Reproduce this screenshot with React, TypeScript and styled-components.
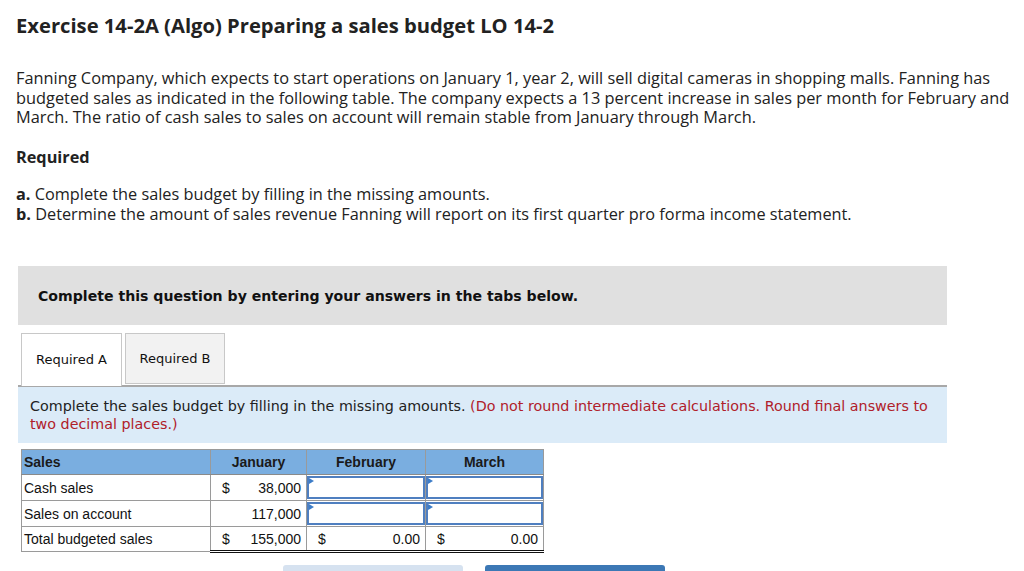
import React from "react";
import styled, { createGlobalStyle } from "styled-components";

const Global = createGlobalStyle`
  html, body { margin: 0; padding: 0; background: #fff; }
  body { font-family: "Open Sans", "Lato", sans-serif; color: #222; }
`;

const Page = styled.div`
  padding: 12px 0 0 16px;
  width: 1024px;
  box-sizing: border-box;
  overflow: hidden;
  height: 571px;
`;

const Title = styled.h1`
  margin: 0;
  font-family: "Open Sans", sans-serif;
  font-weight: 700;
  font-size: 20.2px;
  line-height: 26px;
  color: #222;
`;

const Para = styled.p`
  margin: 31px 0 0 0;
  width: 1004px;
  font-size: 16.35px;
  line-height: 19.5px;
  color: #222;
`;

const Sub = styled.div`
  margin-top: 20px;
  font-weight: 700;
  font-size: 16.3px;
  line-height: 19.5px;
`;

const List = styled.div`
  margin-top: 17px;
  font-size: 16.3px;
  line-height: 20px;
`;

const Instruction = styled.div`
  margin: 42px 0 0 2px;
  width: 929px;
  height: 59px;
  background: #e0e0e0;
  display: flex;
  align-items: center;
  padding-left: 20px;
  box-sizing: border-box;
  font-family: "DejaVu Sans", Verdana, sans-serif;
  font-weight: 700;
  font-size: 14.1px;
  color: #111;
`;

const Tabs = styled.div`
  display: flex;
  gap: 3px;
  margin: 8px 0 0 5px;
  position: relative;
  z-index: 1;
`;

const Tab = styled.div<{ $active?: boolean }>`
  width: ${(p) => (p.$active ? 101 : 100)}px;
  height: ${(p) => (p.$active ? 53 : 51)}px;
  box-sizing: border-box;
  border: 1px solid #c8c8c8;
  border-bottom: ${(p) => (p.$active ? "none" : "1px solid #c8c8c8")};
  background: ${(p) => (p.$active ? "#fff" : "#f2f2f2")};
  display: flex;
  align-items: center;
  justify-content: center;
  padding-bottom: ${(p) => (p.$active ? 2 : 0)}px;
  font-family: "DejaVu Sans", Verdana, sans-serif;
  font-size: 13px;
  color: #111;
`;

const Panel = styled.div`
  margin: -1px 0 0 2px;
  width: 929px;
  box-sizing: border-box;
  border-top: 2px solid #a8a8a8;
  background: #dbebf8;
  padding: 10px 12px 10px 12px;
  font-family: "DejaVu Sans", Verdana, sans-serif;
  font-size: 14.3px;
  line-height: 18px;
  color: #222;
`;

const Red = styled.span`
  color: #b0202a;
`;

const Table = styled.table`
  margin: 6px 0 0 5px;
  border-collapse: collapse;
  font-family: "Liberation Sans", Arial, sans-serif;
  font-size: 14px;
  color: #111;
`;

const Th = styled.th<{ $left?: boolean; $w: number }>`
  width: ${(p) => p.$w}px;
  height: 25px;
  box-sizing: border-box;
  background: #7aaee0;
  border: 1px solid #9a9a9a;
  border-bottom: 1px solid #8a8a8a;
  text-align: ${(p) => (p.$left ? "left" : "center")};
  padding: 0 2px;
  font-weight: 700;
  color: #1a1a1a;
`;

const Td = styled.td<{ $total?: boolean }>`
  height: 25px;
  box-sizing: border-box;
  border: 1px solid #9a9a9a;
  ${(p) => (p.$total ? "border-top: 1px solid #111; border-bottom: 3px double #111;" : "")}
  padding: 0 2px;
  white-space: nowrap;
`;

const LabelTd = styled.td`
  height: 25px;
  box-sizing: border-box;
  border: 1px solid #9a9a9a;
  padding: 0 2px;
`;

const Money = styled.div`
  display: flex;
  justify-content: space-between;
  padding: 0 3px 0 9px;
`;

const InputTd = styled.td`
  height: 25px;
  padding: 0;
  border: 1px solid #9a9a9a;
  position: relative;
`;

const InputBox = styled.div`
  height: 23px;
  box-sizing: border-box;
  border: 2px solid #4f7fc0;
  background: #fff;
  position: relative;
  &::before {
    content: "";
    position: absolute;
    left: 0;
    top: 0;
    border-left: 5px solid #3d7dc8;
    border-top: 3px solid transparent;
    border-bottom: 3px solid transparent;
  }
`;

const Buttons = styled.div`
  display: flex;
  gap: 22px;
  margin: 12px 0 0 267px;
`;

const Btn = styled.div<{ $primary?: boolean }>`
  width: 180px;
  height: 30px;
  border-radius: 3px;
  background: ${(p) => (p.$primary ? "#3c78b5" : "#d6e2f0")};
`;

export default function App() {
  return (
    <Page>
      <Global />
      <Title>Exercise 14-2A (Algo) Preparing a sales budget LO 14-2</Title>
      <Para>
        Fanning Company, which expects to start operations on January 1, year 2, will sell digital cameras in shopping
        malls. Fanning has budgeted sales as indicated in the following table. The company expects a 13 percent increase
        in sales per month for February and March. The ratio of cash sales to sales on account will remain stable from
        January through March.
      </Para>
      <Sub>Required</Sub>
      <List>
        <div>
          <b>a.</b> Complete the sales budget by filling in the missing amounts.
        </div>
        <div>
          <b>b.</b> Determine the amount of sales revenue Fanning will report on its first quarter pro forma income
          statement.
        </div>
      </List>
      <Instruction>Complete this question by entering your answers in the tabs below.</Instruction>
      <Tabs>
        <Tab $active>Required A</Tab>
        <Tab>Required B</Tab>
      </Tabs>
      <Panel>
        Complete the sales budget by filling in the missing amounts.
        <Red> (Do not round intermediate calculations. Round final answers to two decimal places.)</Red>
      </Panel>
      <Table>
        <thead>
          <tr>
            <Th $left $w={189}>Sales</Th>
            <Th $w={96}>January</Th>
            <Th $w={119}>February</Th>
            <Th $w={118}>March</Th>
          </tr>
        </thead>
        <tbody>
          <tr>
            <LabelTd>Cash sales</LabelTd>
            <Td>
              <Money>
                <span>$</span>
                <span>38,000</span>
              </Money>
            </Td>
            <InputTd>
              <InputBox />
            </InputTd>
            <InputTd>
              <InputBox />
            </InputTd>
          </tr>
          <tr>
            <LabelTd>Sales on account</LabelTd>
            <Td>
              <Money>
                <span></span>
                <span>117,000</span>
              </Money>
            </Td>
            <InputTd>
              <InputBox />
            </InputTd>
            <InputTd>
              <InputBox />
            </InputTd>
          </tr>
          <tr>
            <LabelTd>Total budgeted sales</LabelTd>
            <Td $total>
              <Money>
                <span>$</span>
                <span>155,000</span>
              </Money>
            </Td>
            <Td $total>
              <Money>
                <span>$</span>
                <span>0.00</span>
              </Money>
            </Td>
            <Td $total>
              <Money>
                <span>$</span>
                <span>0.00</span>
              </Money>
            </Td>
          </tr>
        </tbody>
      </Table>
      <Buttons>
        <Btn />
        <Btn $primary />
      </Buttons>
    </Page>
  );
}
